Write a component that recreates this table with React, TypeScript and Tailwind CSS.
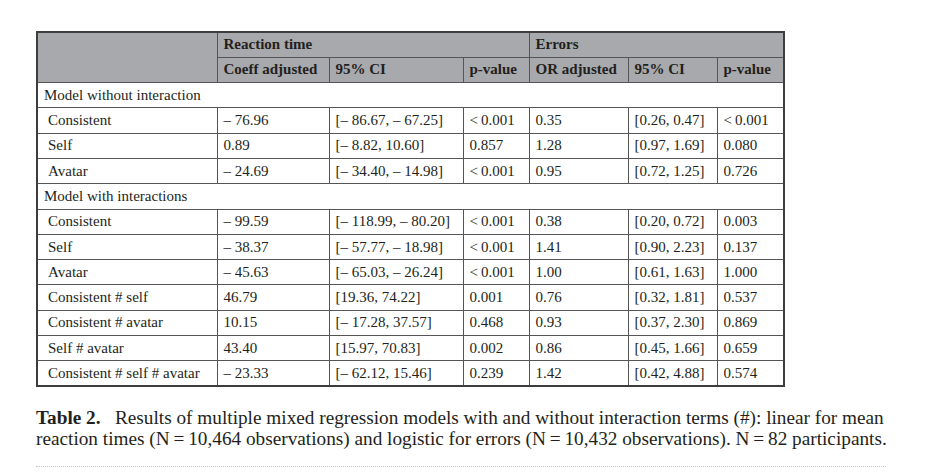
import React from "react";

type Row = [string, string, string, string, string, string, string];

const noInteraction: Row[] = [
  ["Consistent", "– 76.96", "[– 86.67, – 67.25]", "<\u20090.001", "0.35", "[0.26, 0.47]", "<\u20090.001"],
  ["Self", "0.89", "[– 8.82, 10.60]", "0.857", "1.28", "[0.97, 1.69]", "0.080"],
  ["Avatar", "– 24.69", "[– 34.40, – 14.98]", "<\u20090.001", "0.95", "[0.72, 1.25]", "0.726"],
];

const withInteraction: Row[] = [
  ["Consistent", "– 99.59", "[– 118.99, – 80.20]", "<\u20090.001", "0.38", "[0.20, 0.72]", "0.003"],
  ["Self", "– 38.37", "[– 57.77, – 18.98]", "<\u20090.001", "1.41", "[0.90, 2.23]", "0.137"],
  ["Avatar", "– 45.63", "[– 65.03, – 26.24]", "<\u20090.001", "1.00", "[0.61, 1.63]", "1.000"],
  ["Consistent # self", "46.79", "[19.36, 74.22]", "0.001", "0.76", "[0.32, 1.81]", "0.537"],
  ["Consistent # avatar", "10.15", "[– 17.28, 37.57]", "0.468", "0.93", "[0.37, 2.30]", "0.869"],
  ["Self # avatar", "43.40", "[15.97, 70.83]", "0.002", "0.86", "[0.45, 1.66]", "0.659"],
  ["Consistent # self # avatar", "– 23.33", "[– 62.12, 15.46]", "0.239", "1.42", "[0.42, 4.88]", "0.574"],
];

const cell = "border border-[#555] px-[6px] align-middle whitespace-nowrap";

function DataRow({ row }: { row: Row }) {
  return (
    <tr className="h-[25.3px]">
      <td className={`${cell} pl-[10px]`}>{row[0]}</td>
      {row.slice(1).map((v, i) => (
        <td key={i} className={cell}>
          {v}
        </td>
      ))}
    </tr>
  );
}

function Section({ title }: { title: string }) {
  return (
    <tr className="h-[25.3px]">
      <td colSpan={7} className={`${cell} pl-[6px]`}>
        {title}
      </td>
    </tr>
  );
}

export default function App() {
  return (
    <div className="w-[928px] h-[472px] bg-white text-[#231f20] font-['Liberation_Serif',serif] pt-[31px] pl-[36px]">
      <table className="table-fixed border-collapse border-2 border-[#3d3d3d] text-[15px] leading-none w-[747px]">
        <colgroup>
          <col className="w-[180px]" />
          <col className="w-[112px]" />
          <col className="w-[134px]" />
          <col className="w-[66px]" />
          <col className="w-[99px]" />
          <col className="w-[89px]" />
          <col className="w-[67px]" />
        </colgroup>
        <thead className="bg-[#a7a9ac] font-bold">
          <tr className="h-[25.3px]">
            <th rowSpan={2} className={cell}></th>
            <th colSpan={3} className={`${cell} text-left`}>
              Reaction time
            </th>
            <th colSpan={3} className={`${cell} text-left`}>
              Errors
            </th>
          </tr>
          <tr className="h-[25.3px]">
            <th className={`${cell} text-left`}>Coeff adjusted</th>
            <th className={`${cell} text-left`}>95% CI</th>
            <th className={`${cell} text-left`}>p-value</th>
            <th className={`${cell} text-left`}>OR adjusted</th>
            <th className={`${cell} text-left`}>95% CI</th>
            <th className={`${cell} text-left`}>p-value</th>
          </tr>
        </thead>
        <tbody>
          <Section title="Model without interaction" />
          {noInteraction.map((r) => (
            <DataRow key={r[0]} row={r} />
          ))}
          <Section title="Model with interactions" />
          {withInteraction.map((r) => (
            <DataRow key={r[0]} row={r} />
          ))}
        </tbody>
      </table>
      <p className="mt-[20px] text-[19.25px] leading-[21px] w-[880px] whitespace-nowrap">
        <span className="font-bold">Table 2.</span>
        {"\u2002 "}Results of multiple mixed regression models with and without interaction terms (#): linear for mean
        <br />
        reaction times (N{"\u2009=\u2009"}10,464 observations) and logistic for errors (N{"\u2009=\u2009"}10,432 observations). N{"\u2009=\u2009"}82 participants.
      </p>
      <div className="mt-[17px] w-[850px] border-t border-dotted border-[#c8c8c8]" />
    </div>
  );
}
